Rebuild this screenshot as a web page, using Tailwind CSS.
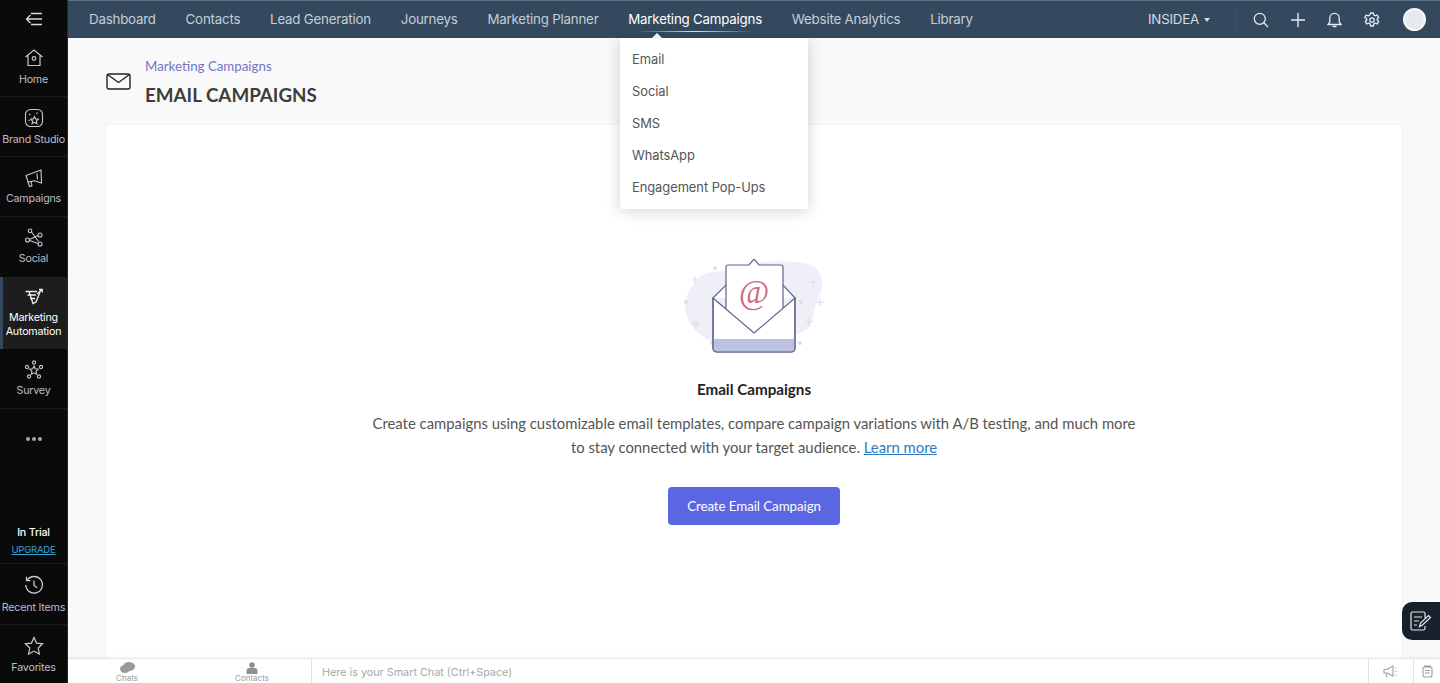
<!DOCTYPE html>
<html lang="en">
<head>
<meta charset="utf-8"/>
<title>Email Campaigns</title>
<script src="https://cdn.jsdelivr.net/npm/@tailwindcss/browser@4"></script>
</head>
<body class="h-[683px] w-[1440px] overflow-hidden flex font-['Inter',sans-serif] bg-[#f9f9f9]">

<!-- sidebar -->
<aside class="w-[68px] h-full shrink-0 bg-[#0a0a0b] border-r border-[#2a2a2c] flex flex-col text-[10.7px] tracking-[-0.2px] text-[#bcbdc9] text-center">
  <div class="h-[38px] flex items-center justify-center">
    <svg class="w-[18px] h-[14px]" viewBox="0 0 18 14" fill="none" stroke="#d8d8de" stroke-width="1.3"><path d="M1.500 7H17M6 1.500H17M6 12.500H17M5.500 3L1.500 7l4 4"/></svg>
  </div>
  <a class="h-[59px] border-b border-[#1c1c1e] flex flex-col items-center pt-[10px]">
    <svg class="w-[20px] h-[20px]" viewBox="0 0 20 20" fill="none" stroke="#c8c8d0" stroke-width="1.200"><path d="M1.500 9L10 2l8.500 7M4 7.500V17.500H16V7.500"/><circle cx="10" cy="10.500" r="1.800"/></svg>
    <span class="mt-[4px] leading-[16px]">Home</span>
  </a>
  <a class="h-[60px] border-b border-[#1c1c1e] flex flex-col items-center pt-[11px]">
    <svg class="w-[20px] h-[20px]" viewBox="0 0 20 20" fill="none" stroke="#c8c8d0" stroke-width="1.100"><rect x="1.500" y="1.500" width="17" height="17" rx="5"/><path d="M10.500 8.500l1.200 2.400 2.600.3-1.900 1.800.5 2.600-2.400-1.300-2.400 1.300.5-2.600-1.900-1.800 2.600-.3z"/><path d="M5 6l1.500 1M13.500 4.500l-1 1.500M4.500 12l1 1"/></svg>
    <span class="mt-[4px] leading-[16px] whitespace-nowrap">Brand Studio</span>
  </a>
  <a class="h-[60px] border-b border-[#1c1c1e] flex flex-col items-center pt-[11px]">
    <svg class="w-[20px] h-[20px]" viewBox="0 0 20 20" fill="none" stroke="#c8c8d0" stroke-width="1.100"><path d="M2 7.500l15-5.500.5 13-7-2.200-6.500 1.200z"/><path d="M4 14l1.500 4.500 2.500-.7-1-4.300M13 5.500l.5 6"/></svg>
    <span class="mt-[3px] leading-[16px]">Campaigns</span>
  </a>
  <a class="h-[60px] flex flex-col items-center pt-[11px]">
    <svg class="w-[20px] h-[20px]" viewBox="0 0 20 20" fill="none" stroke="#c8c8d0" stroke-width="1.100"><circle cx="6" cy="2.800" r="1.800"/><circle cx="16" cy="7" r="2"/><circle cx="3.500" cy="12" r="2"/><circle cx="16" cy="16" r="2"/><path d="M7.500 4l7 9.500M14 7.500L5.500 11.500M5.500 12.500L14 15.500"/></svg>
    <span class="mt-[3px] leading-[16px]">Social</span>
  </a>
  <a class="h-[72px] bg-[#1d1d1f] border-l-[3px] border-[#34495e] flex flex-col items-center pt-[11px] pr-[3px] text-white">
    <svg class="w-[20px] h-[18px]" viewBox="0 0 20 18" fill="none" stroke="#f0f0f2" stroke-width="1.300"><path d="M1.500 3.500H13M3.500 7H12M5 3.500L9 15.500l3-1.500 4-10"/><path d="M6 10.500h5M13 6l5-4.500M15 1.500h3.200v3"/></svg>
    <span class="mt-[5px] leading-[14px]">Marketing<br/>Automation</span>
  </a>
  <a class="h-[60px] border-b border-[#1c1c1e] flex flex-col items-center pt-[11px]">
    <svg class="w-[20px] h-[20px]" viewBox="0 0 20 20" fill="none" stroke="#c8c8d0" stroke-width="1.100"><circle cx="10" cy="2.500" r="1.600"/><circle cx="3" cy="7" r="1.600"/><circle cx="17" cy="7" r="1.600"/><circle cx="5" cy="16.500" r="1.600"/><circle cx="15" cy="16.500" r="1.600"/><path d="M10 6l1.300 2.700 3 .4-2.200 2.100.5 3-2.600-1.400-2.600 1.400.5-3-2.200-2.100 3-.4z"/></svg>
    <span class="mt-[3px] leading-[16px]">Survey</span>
  </a>
  <div class="h-[60px] flex items-center justify-center gap-[2px]">
    <i class="w-[4px] h-[4px] rounded-full bg-[#a5a5ac]"></i><i class="w-[4px] h-[4px] rounded-full bg-[#a5a5ac]"></i><i class="w-[4px] h-[4px] rounded-full bg-[#a5a5ac]"></i>
  </div>
  <div class="mt-auto h-[39px] pt-[1px] border-b border-[#1c1c1e] flex flex-col items-center">
    <span class="text-white leading-[14px] font-medium">In Trial</span>
    <a class="mt-[3px] text-[9.500px] leading-[14px] text-[#35a5d6] underline">UPGRADE</a>
  </div>
  <a class="h-[61px] border-b border-[#1c1c1e] flex flex-col items-center pt-[11px]">
    <svg class="w-[20px] h-[20px]" viewBox="0 0 20 20" fill="none" stroke="#c8c8d0" stroke-width="1.300"><path d="M3.200 5.200A8.300 8.300 0 1 1 1.800 10"/><path d="M2.500 1.800v3.800h3.800M10 5.500V10.500l3.200 2.200"/></svg>
    <span class="mt-[5px] leading-[16px] whitespace-nowrap">Recent Items</span>
  </a>
  <a class="h-[58px] flex flex-col items-center pt-[11px]">
    <svg class="w-[20px] h-[20px]" viewBox="0 0 20 20" fill="none" stroke="#c8c8d0" stroke-width="1.200"><path d="M10 1.500l2.600 5.600 6 .7-4.400 4.200 1.200 6.100L10 15.100l-5.400 3 1.200-6.100L1.400 7.800l6-.7z"/></svg>
    <span class="mt-[4px] leading-[16px]">Favorites</span>
  </a>
</aside>

<div class="flex-1 min-w-0 flex flex-col relative">
  <!-- top nav -->
  <header class="h-[38px] shrink-0 bg-[#34495e] border-t border-[#5d7084] flex items-center pl-[21px] text-[13.300px] tracking-[-0.2px] text-[#c5ced8]">
    <nav class="flex gap-[29.800px]">
      <a>Dashboard</a>
      <a>Contacts</a>
      <a>Lead Generation</a>
      <a>Journeys</a>
      <a>Marketing Planner</a>
      <a class="text-white relative">Marketing Campaigns
        <span class="absolute left-[8px] right-[8px] -bottom-[3px] h-[1px] bg-gradient-to-r from-transparent via-[#dfe6ee] to-transparent"></span>
        <span class="absolute left-[24px] -bottom-[9px] border-x-[5px] border-x-transparent border-b-[5px] border-b-white"></span>
      </a>
      <a>Website Analytics</a>
      <a>Library</a>
    </nav>
    <div class="ml-auto flex items-center">
      <span class="flex items-center gap-[5px] mr-[25px] text-[#d5dbe2]">INSIDEA <i class="border-x-[3.500px] border-x-transparent border-t-[4px] border-t-[#d5dbe2]"></i></span>
      <span class="w-[1px] h-[20px] bg-[#3e5369] mr-[17px]"></span>
      <svg class="w-[16px] h-[16px] mr-[22px]" viewBox="0 0 16 16" fill="none" stroke="#e5e9ee" stroke-width="1.300"><circle cx="6.800" cy="6.800" r="5.500"/><path d="M10.800 10.800L15 15"/></svg>
      <svg class="w-[14px] h-[14px] mr-[22px]" viewBox="0 0 14 14" fill="none" stroke="#e5e9ee" stroke-width="1.400"><path d="M7 0v14M0 7h14"/></svg>
      <svg class="w-[15px] h-[16px] mr-[22px]" viewBox="0 0 15 16" fill="none" stroke="#e5e9ee" stroke-width="1.300"><path d="M1 12.500h13l-1.800-2.500V6a4.700 4.700 0 0 0-9.400 0v4zM5.500 14.500h4"/></svg>
      <svg class="w-[16px] h-[16px] mr-[23px]" viewBox="0 0 16 16" fill="none" stroke="#e5e9ee" stroke-width="1.300"><path d="M6.600 1h2.800l.4 2 1.500.8 2-.7 1.400 2.500-1.500 1.300v1.200l1.500 1.300-1.400 2.500-2-.7-1.500.8-.4 2H6.600l-.4-2-1.500-.8-2 .7-1.400-2.500 1.500-1.300V7.100L.8 5.600l1.400-2.500 2 .7 1.500-.8z"/><circle cx="8" cy="8" r="2.200"/></svg>
      <span class="w-[23px] h-[23px] rounded-full bg-[#e6e9ee] border-2 border-[#f7f8fa] mr-[14px]"></span>
    </div>
  </header>

  <!-- page -->
  <main class="flex-1 min-h-0 px-[37px] overflow-hidden">
    <div class="h-[86px] flex ml-[1px] font-['Lato',sans-serif]">
      <svg class="w-[25px] h-[17px] mt-[35px] mr-[14px]" viewBox="0 0 25 17" fill="none" stroke="#222" stroke-width="1.400"><rect x="1" y="1" width="23" height="15" rx="2"/><path d="M1.500 1.500L12.500 9.500 23.500 1.500"/></svg>
      <div class="pt-[19px]">
        <a class="block text-[13.300px] leading-[18px] text-[#7274c4]">Marketing Campaigns</a>
        <h1 class="mt-[8px] text-[18.800px] leading-[24px] font-bold text-[#3d3d3d]">EMAIL CAMPAIGNS</h1>
      </div>
    </div>
    <section class="w-[1298px] h-[540px] bg-white border border-[#f3f3f3] flex flex-col items-center font-['Lato',sans-serif]">
      <svg class="mt-[134px] w-[146px] h-[96px]" viewBox="0 0 146 96" fill="none">
        <path d="M14 24C22 8 40 16 56 8c20-6 54-8 72-3 14 5 16 20 10 32-6 12-4 22-9 30-6 8-18 8-26 16H34C18 79 4 64 4 46c0-8 4-15 10-22z" fill="#eff0f7"/>
        <g stroke="#dcdeea" stroke-width="1.200"><path d="M14 17v8M10 21h8M15 61v8M11 65h8M132 19v8M128 23h8M139 39v8M135 43h8M128 59v8M124 63h8"/></g>
        <circle cx="34" cy="9" r="2" fill="#dcdeea"/><circle cx="5" cy="43" r="2" fill="#dcdeea"/><circle cx="120" cy="43" r="2" fill="#dcdeea"/><circle cx="119" cy="84" r="2" fill="#dcdeea"/><circle cx="31" cy="84" r="2" fill="#dcdeea"/>
        <!-- back flap, letter, then the envelope front over them -->
        <path d="M32 39L45 26h57l12 13" fill="#fff" stroke="#5f6390" stroke-width="1.200"/>
        <path d="M47 6h21l5-6 5 6h22a2 2 0 0 1 2 2v72H45V8a2 2 0 0 1 2-2z" fill="#fff" stroke="#5f6390" stroke-width="1.200"/>
        <text x="73" y="44" text-anchor="middle" font-family="Liberation Serif, serif" font-size="33" fill="#cf6c78" font-style="italic">@</text>
        <path d="M32 39l41 35 41-35v50a4 4 0 0 1-4 4H36a4 4 0 0 1-4-4z" fill="#fff" stroke="#5f6390" stroke-width="1.200"/>
        <path d="M32.600 80h80.800v9a3.400 3.400 0 0 1-3.400 3.400H36a3.400 3.400 0 0 1-3.400-3.400z" fill="#bcc0e2"/>
        <path d="M32 39v50a4 4 0 0 0 4 4h74a4 4 0 0 0 4-4V39" stroke="#5f6390" stroke-width="1.200"/>
      </svg>
      <h2 class="mt-[22px] text-[15.200px] leading-[24px] font-bold text-[#222]">Email Campaigns</h2>
      <p class="mt-[10px] w-[775px] text-center text-[14.850px] leading-[24px] text-[#555]">Create campaigns using customizable email templates, compare campaign variations with A/B testing, and much more to stay connected with your target audience. <a class="text-[#2b7cc4] underline">Learn more</a></p>
      <button class="mt-[28px] w-[172px] h-[38px] rounded-[4px] bg-[#5b66e3] text-white text-[13.400px] tracking-[-0.1px]">Create Email Campaign</button>
    </section>
  </main>

  <!-- dropdown -->
  <div class="absolute left-[552px] top-[38px] w-[188px] h-[171px] bg-white shadow-[0_2px_14px_rgba(0,0,0,0.18)] py-[6px] px-[12px] text-[12.900px] tracking-[-0.05px] text-[#555]">
    <a class="block h-[32px] leading-[32px]">Email</a>
    <a class="block h-[32px] leading-[32px]">Social</a>
    <a class="block h-[32px] leading-[32px]">SMS</a>
    <a class="block h-[32px] leading-[32px]">WhatsApp</a>
    <a class="block h-[32px] leading-[32px]">Engagement Pop-Ups</a>
  </div>

  <!-- floating notes tab -->
  <div class="absolute right-0 top-[602px] w-[38px] h-[38px] rounded-l-[10px] bg-[#17202b] flex items-center justify-center">
    <svg class="w-[22px] h-[20px]" viewBox="0 0 22 20" fill="none" stroke="#e4e6ea" stroke-width="1.200"><path d="M15 7V2.500A1.500 1.500 0 0 0 13.500 1h-11A1.500 1.500 0 0 0 1 2.500v15A1.500 1.500 0 0 0 2.500 19h11a1.500 1.500 0 0 0 1.500-1.500V15M4 6h8M4 10h5M4 14h3M9.500 15.500l1-3.500 8-7.500 2 2-8 7.500z"/></svg>
  </div>

  <!-- smart chat bar -->
  <footer class="h-[25px] shrink-0 bg-white border-t border-[#e6e6e6] shadow-[0_-1px_3px_rgba(0,0,0,0.05)] flex text-[#9a9a9a] relative">
    <div class="w-[118px] flex flex-col items-center justify-end">
      <svg class="w-[15px] h-[12px] -mb-[1px]" viewBox="0 0 15 12" fill="#9a9a9a"><ellipse cx="9" cy="4.500" rx="6" ry="4.500"/><ellipse cx="5" cy="7" rx="5" ry="4"/></svg>
      <span class="text-[8px] leading-[10px]">Chats</span>
    </div>
    <div class="w-[125px] flex flex-col items-center justify-end pl-[7px]">
      <svg class="w-[12px] h-[12px] -mb-[1px]" viewBox="0 0 12 12" fill="#8f8f8f"><circle cx="6" cy="3" r="2.800"/><path d="M0.500 12V9a3 3 0 0 1 3-3h5a3 3 0 0 1 3 3v3z"/></svg>
      <span class="text-[8px] leading-[10px]">Contacts</span>
    </div>
    <div class="flex-1 border-l border-[#e0e0e0] pl-[10px] text-[10.800px] leading-[28px] text-[#a8a8a8]">Here is your Smart Chat (Ctrl+Space)</div>
    <div class="w-[45px] border-l border-[#e0e0e0] flex items-center justify-center">
      <svg class="w-[16px] h-[13px]" viewBox="0 0 16 13" fill="none" stroke="#a0a0a0" stroke-width="1.100"><path d="M1 4.500h3L10 1v10L4 8H1zM3 8l1 4M13 2.500v1M13 6v1M13 9.500v1"/></svg>
    </div>
    <div class="w-[27px] border-l border-[#e0e0e0] flex items-center justify-center">
      <svg class="w-[13px] h-[13px]" viewBox="0 0 13 13" fill="none" stroke="#a0a0a0" stroke-width="1.100"><path d="M2 3.500A1.500 1.500 0 0 1 3.500 2h6A1.500 1.500 0 0 1 11 3.500V10a2 2 0 0 1-2 2H4a2 2 0 0 1-2-2zM3 1h7M4 5.500h5M4 8h5"/></svg>
    </div>
  </footer>
</div>
</body>
</html>
